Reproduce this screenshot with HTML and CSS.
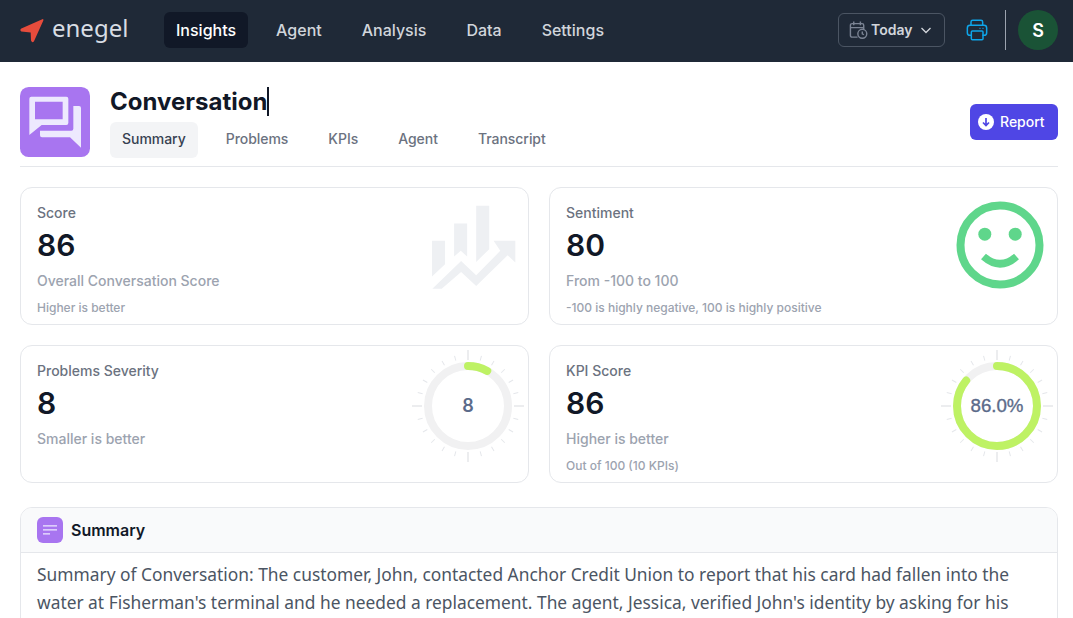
FILE: index.html
```html
<!DOCTYPE html>
<html lang="en">
<head>
<meta charset="utf-8">
<title>Conversation</title>
<link rel="stylesheet" href="styles.css">
</head>
<body>
<header class="topbar">
  <a class="logo">
    <svg class="logo-mark" viewBox="60 50 75 80"><path d="M127 56 L64 84 Q58 88 64 93 L92 96 L93 120 Q97 129 102 122 L130 60 Q131 54 127 56 Z" fill="#e74c3c"/></svg>
    <span class="logo-text">enegel</span>
  </a>
  <nav class="mainnav">
    <a class="mainnav-item is-active">Insights</a>
    <a class="mainnav-item">Agent</a>
    <a class="mainnav-item">Analysis</a>
    <a class="mainnav-item">Data</a>
    <a class="mainnav-item">Settings</a>
  </nav>
  <div class="topbar-right">
    <button class="date-btn">
      <svg class="date-icon" viewBox="0 0 20 20" fill="none" stroke="#7b8494" stroke-width="1.5"><path d="M9 17.5H3.2a1.7 1.7 0 0 1-1.7-1.7V5a1.7 1.700 0 0 1 1.700-1.700h10.600A1.700 1.700 0 0 1 15.500 5v4M1.500 7.500h14M5 1v4M12 1v4"/><circle cx="14" cy="14" r="4.700"/><path d="M14 11.500V14l1.700 1"/></svg>
      <span class="btn-label">Today</span>
      <svg class="chev" viewBox="0 0 12 12" fill="none" stroke="#d1d5db" stroke-width="1.300"><path d="M1.500 4 6 8.500 10.500 4"/></svg>
    </button>
    <svg class="printer" viewBox="435 54 72 72" fill="none" stroke="#0ea5e9" stroke-width="4.500" stroke-linecap="round" stroke-linejoin="round">
      <path d="M454 106H450a8 8 0 0 1-8-8V84a8 8 0 0 1 8-8H492a8 8 0 0 1 8 8V98a8 8 0 0 1-8 8H489"/>
      <path d="M453 76V66a5 5 0 0 1 5-5H483a5 5 0 0 1 5 5V76"/>
      <rect x="454" y="93" width="35" height="26" rx="3"/>
      <path d="M479 85H481M488 85H490" stroke-width="2.500"/>
    </svg>
    <span class="divider"></span>
    <span class="avatar">S</span>
  </div>
</header>

<main class="page">
  <section class="head">
    <svg class="head-icon" viewBox="60 261 210 210">
      <rect x="60" y="261" width="210" height="210" rx="26" fill="#a875f0"/>
      <path fill="#ede9fe" fill-rule="evenodd" d="M94 290H199a6 6 0 0 1 6 6V369a6 6 0 0 1-6 6H125L88 405V296a6 6 0 0 1 6-6ZM105 305V358H188V305Z"/>
      <path fill="#ede9fe" d="M220 318H237a6 6 0 0 1 6 6V443L210 412H126a6 6 0 0 1-6-6V392H214a6 6 0 0 0 6-6Z"/>
    </svg>
    <div class="head-main">
      <h1 class="title"><span class="title-text">Conversation</span></h1>
      <div class="tabs">
        <a class="tab is-active">Summary</a>
        <a class="tab">Problems</a>
        <a class="tab">KPIs</a>
        <a class="tab">Agent</a>
        <a class="tab">Transcript</a>
      </div>
    </div>
    <button class="report-btn">
      <svg class="report-icon" viewBox="0 0 16 16"><circle cx="8" cy="8" r="8" fill="#fff"/><path d="M8 4v7.500M5 8.500l3 3 3-3" fill="none" stroke="#4f46e5" stroke-width="1.700"/></svg>
      <span class="btn-label">Report</span>
    </button>
  </section>

  <section class="cards">
    <article class="card">
      <div class="card-label">Score</div>
      <div class="card-value">86</div>
      <div class="card-desc">Overall Conversation Score</div>
      <div class="card-note">Higher is better</div>
      <svg class="deco chart-deco" viewBox="90 55 260 260"><path fill="#eef0f3" d="M96 165H135V235L96 272ZM162 113H201V212L182 195 162 212ZM228 60H267V190L228 228ZM97 308 183 225 228 268 300 195 280 165H345V230L322 208 228 300 183 258 125 308Z"/></svg>
    </article>
    <article class="card">
      <div class="card-label">Sentiment</div>
      <div class="card-value">80</div>
      <div class="card-desc">From -100 to 100</div>
      <div class="card-note">-100 is highly negative, 100 is highly positive</div>
      <svg class="deco smile-deco" viewBox="0 0 88 88" fill="none"><circle cx="44" cy="44" r="39.500" stroke="#5fd68b" stroke-width="8"/><circle cx="28.800" cy="33.200" r="6.500" fill="#5fd68b"/><circle cx="59.200" cy="33.200" r="6.500" fill="#5fd68b"/><path d="M27.500 55.500Q44 70 60.500 55.500" stroke="#5fd68b" stroke-width="7.500"/></svg>
    </article>
    <article class="card">
      <div class="card-label">Problems Severity</div>
      <div class="card-value">8</div>
      <div class="card-desc">Smaller is better</div>
      <svg class="deco gauge" viewBox="-57 -57 114 114" fill="none">
        <defs>
          <g id="tick-quarter">
            <path d="M0-46V-56" stroke="#d9dbdf"/>
            <path d="M0-47V-52" stroke="#e5e7eb" transform="rotate(15)"/>
            <path d="M0-47V-52" stroke="#e5e7eb" transform="rotate(30)"/>
            <path d="M0-47V-52" stroke="#e5e7eb" transform="rotate(45)"/>
            <path d="M0-47V-52" stroke="#e5e7eb" transform="rotate(60)"/>
            <path d="M0-47V-52" stroke="#e5e7eb" transform="rotate(75)"/>
          </g>
          <g id="ticks">
            <use href="#tick-quarter"/>
            <use href="#tick-quarter" transform="rotate(90)"/>
            <use href="#tick-quarter" transform="rotate(180)"/>
            <use href="#tick-quarter" transform="rotate(270)"/>
          </g>
        </defs>
        <use href="#ticks"/>
        <circle r="40" stroke="#f1f1f2" stroke-width="8"/>
        <circle class="gauge-arc" r="40" pathLength="100" stroke-dasharray="8 100"/>
        <text class="gauge-num" y="5.500">8</text>
      </svg>
    </article>
    <article class="card">
      <div class="card-label">KPI Score</div>
      <div class="card-value">86</div>
      <div class="card-desc">Higher is better</div>
      <div class="card-note">Out of 100 (10 KPIs)</div>
      <svg class="deco gauge" viewBox="-57 -57 114 114" fill="none">
        <use href="#ticks"/>
        <circle r="40" stroke="#f1f1f2" stroke-width="8"/>
        <circle class="gauge-arc" r="40" pathLength="100" stroke-dasharray="86 100"/>
        <text class="gauge-pct" y="5.500">86.0%</text>
      </svg>
    </article>
  </section>

  <section class="summary">
    <div class="summary-head">
      <span class="summary-icon">
        <svg viewBox="0 0 26 26" fill="none" stroke="#ede9fe" stroke-width="1.300"><path d="M6 8.800H20M6 12.800H20M6 16.800H13"/></svg>
      </span>
      <h2 class="summary-title">Summary</h2>
    </div>
    <p class="summary-body">Summary of Conversation: The customer, John, contacted Anchor Credit Union to report that his card had fallen into the water at Fisherman's terminal and he needed a replacement. The agent, Jessica, verified John's identity by asking for his</p>
  </section>
</main>
</body>
</html>
```
FILE: styles.css
```css
* { box-sizing: border-box; }
html, body { margin: 0; height: 100%; overflow: hidden; background: #fff; }
body { font-family: Inter, "Liberation Sans", sans-serif; color: #111827; }
button { font-family: inherit; border: 0; background: none; padding: 0; }

.topbar { height: 62px; background: #1f2937; display: flex; align-items: center; padding: 0 15px 2px 20px; }
.logo { display: flex; align-items: center; gap: 7px; width: 144px; }
.logo-mark { width: 25px; height: 27px; }
.logo-text { font-family: "Noto Sans", sans-serif; font-size: 24px; line-height: 30px; color: #d8dde4; position: relative; top: -2px; }
.mainnav { display: flex; gap: 16px; }
.mainnav-item { padding: 8px 12px; height: 36px; line-height: 20px; font-size: 16px; font-weight: 500; color: #d1d5db; border-radius: 6px; }
.mainnav-item.is-active { background: #111827; color: #fff; }
.topbar-right { margin-left: auto; display: flex; align-items: center; }
.date-btn { width: 107px; height: 34px; border: 1px solid #4b5563; border-radius: 6px; display: flex; align-items: center; padding-left: 10px; font-size: 14px; font-weight: 600; color: #d1d5db; }
.btn-label { padding-bottom: 2px; }
.date-icon { width: 19px; height: 20px; margin-right: 3px; }
.chev { width: 12px; height: 12px; margin-left: 8px; }
.printer { width: 24px; height: 24px; margin-left: 20px; }
.divider { width: 1px; height: 40px; background: #9ca3af; margin-left: 16px; }
.avatar { width: 40px; height: 40px; border-radius: 50%; background: #1a5336; color: #fff; font-size: 18px; font-weight: 600; display: flex; align-items: center; justify-content: center; margin-left: 12px; }

.page { padding: 25px 15px 0 20px; }
.head { display: flex; align-items: flex-start; gap: 20px; padding-bottom: 8px; border-bottom: 1px solid #e5e7eb; }
.head-icon { width: 70px; height: 70px; flex: none; }
.head-main { flex: 1; }
.title { margin: 0 0 6px; font-size: 24px; line-height: 29px; font-weight: 700; color: #111827; }
.title-text { border-right: 2px solid #111827; }
.tabs { display: flex; gap: 16px; }
.tab { padding: 7px 12px 9px; height: 36px; font-size: 14px; line-height: 20px; font-weight: 500; color: #6b7280; border-radius: 6px; letter-spacing: -0.04px; }
.tab.is-active { background: #f3f4f6; color: #374151; }
.report-btn { width: 88px; height: 36px; margin-top: 17px; background: #4f46e5; border-radius: 6px; display: flex; align-items: center; gap: 6px; padding-left: 8px; color: #fff; font-size: 14px; font-weight: 500; }
.report-icon { width: 16px; height: 16px; }

.cards { display: grid; grid-template-columns: 1fr 1fr; grid-auto-rows: 138px; gap: 20px; margin-top: 20px; }
.card { position: relative; border: 1px solid #e5e7eb; border-radius: 12px; padding: 15px 16px; }
.card-label { font-size: 14px; line-height: 20px; font-weight: 500; color: #6b7280; }
.card-value { font-size: 30px; line-height: 36px; font-weight: 600; color: #111827; margin-top: 4px; }
.card-desc { font-size: 14px; line-height: 20px; font-weight: 500; color: #9ca3af; margin-top: 8px; }
.card-note { font-size: 12px; line-height: 16px; font-weight: 500; color: #9ca3af; margin-top: 9px; }
.deco { position: absolute; }
.chart-deco { width: 87px; height: 87px; top: 16px; right: 11px; }
.smile-deco { width: 88px; height: 88px; top: 12.500px; right: 12.700px; }
.gauge { width: 114px; height: 114px; top: 2.700px; right: 3px; }
.gauge-arc { stroke: #bef264; stroke-width: 8; stroke-linecap: round; transform: rotate(-90deg); }
.gauge-num { font-family: Inter, sans-serif; font-size: 18px; font-weight: 600; fill: #5b6b8a; text-anchor: middle; }
.gauge-pct { font-family: "Liberation Sans", sans-serif; font-size: 18.700px; font-weight: 400; fill: #5b6b8a; stroke: #5b6b8a; stroke-width: 0.350px; text-anchor: middle; }

.summary { margin-top: 24px; border: 1px solid #e5e7eb; border-radius: 12px; overflow: hidden; }
.summary-head { height: 45px; background: #f9fafb; border-bottom: 1px solid #e5e7eb; display: flex; align-items: center; gap: 8px; padding: 0 16px; }
.summary-icon { width: 26px; height: 26px; border-radius: 6px; background: #a875f0; display: block; }
.summary-icon svg { display: block; width: 26px; height: 26px; }
.summary-title { margin: 0; font-size: 16px; line-height: 24px; font-weight: 600; color: #111827; }
.summary-body { margin: 0; padding: 7px 16px 16px; font-family: "Noto Sans", sans-serif; font-size: 17.370px; line-height: 28px; color: #4b5563; }
```
